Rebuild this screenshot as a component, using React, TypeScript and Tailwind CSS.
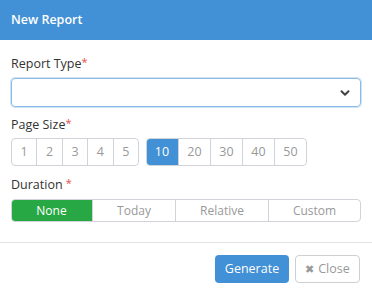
import { ChevronDown } from "lucide-react";

const small = ["1", "2", "3", "4", "5"];
const large = ["10", "20", "30", "40", "50"];
const durations = [
  { label: "None", w: "w-[81px]" },
  { label: "Today", w: "w-[83px]" },
  { label: "Relative", w: "w-[93px]" },
  { label: "Custom", w: "flex-1" },
];

function Req() {
  return <span className="text-[#e3504b] text-[11px] align-top relative -top-[2px]">*</span>;
}

export default function App() {
  return (
    <div className="w-[372px] h-[296px] bg-white font-['Open_Sans',sans-serif] text-[12.5px] text-[#333] overflow-hidden">
      <div className="h-10 bg-[#4290d5] flex items-center px-[11px]">
        <span className="text-white font-semibold text-[12.5px]">New Report</span>
      </div>

      <div className="px-[11px] pt-[15px]">
        <div className="h-[18px] leading-[18px]">
          Report Type<Req />
        </div>
        <div className="mt-[5px] h-[29px] rounded-[4px] border border-[#8dbbe8] shadow-[0_0_0_1px_rgba(66,144,213,0.25)] flex items-center justify-end pr-[8px]">
          <ChevronDown size={14} strokeWidth={3.5} className="text-[#444]" />
        </div>

        <div className="mt-[9px] h-[18px] leading-[18px]">
          Page Size<Req />
        </div>
        <div className="mt-[4px] flex gap-[7px]">
          <div className="flex rounded-[4px] border border-[#d0d4da] overflow-hidden">
            {small.map((n, i) => (
              <div
                key={n}
                className={`w-[24.4px] h-[26px] flex items-center justify-center text-[#999] ${i > 0 ? "border-l border-[#d0d4da] w-[25.4px]" : ""}`}
              >
                {n}
              </div>
            ))}
          </div>
          <div className="flex rounded-[4px] border border-[#d0d4da] overflow-hidden">
            {large.map((n, i) => (
              <div
                key={n}
                className={`h-[26px] flex items-center justify-center ${
                  i === 0 ? "bg-[#4290d5] text-white -my-px -ml-px h-[28px] w-[32px]" : "w-[32px] text-[#999] border-l border-[#d0d4da]"
                }`}
              >
                {n}
              </div>
            ))}
          </div>
        </div>

        <div className="mt-[10px] h-[18px] leading-[18px]">
          Duration <Req />
        </div>
        <div className="mt-[5px] flex h-[23px] rounded-[4px] border border-[#d0d4da] overflow-hidden text-[12px]">
          {durations.map((d, i) => (
            <div
              key={d.label}
              className={`${d.w} flex items-center justify-center ${
                i === 0 ? "bg-[#28a745] text-white -my-px -ml-px h-[23px]" : "text-[#999] border-l border-[#d0d4da]"
              }`}
            >
              {d.label}
            </div>
          ))}
        </div>
      </div>

      <div className="mt-[20px] border-t border-[#e3e3e3] flex justify-end gap-[6px] px-[12px] pt-[12px]">
        <button className="w-[74px] h-[28px] rounded-[4px] bg-[#4290d5] text-white text-[12.5px]">Generate</button>
        <button className="w-[65px] h-[28px] rounded-[4px] border border-[#cfcfcf] text-[#999] text-[12.5px] flex items-center justify-center gap-[4px]">
          <span className="text-[11px] text-[#999]">✖</span>Close
        </button>
      </div>
    </div>
  );
}
